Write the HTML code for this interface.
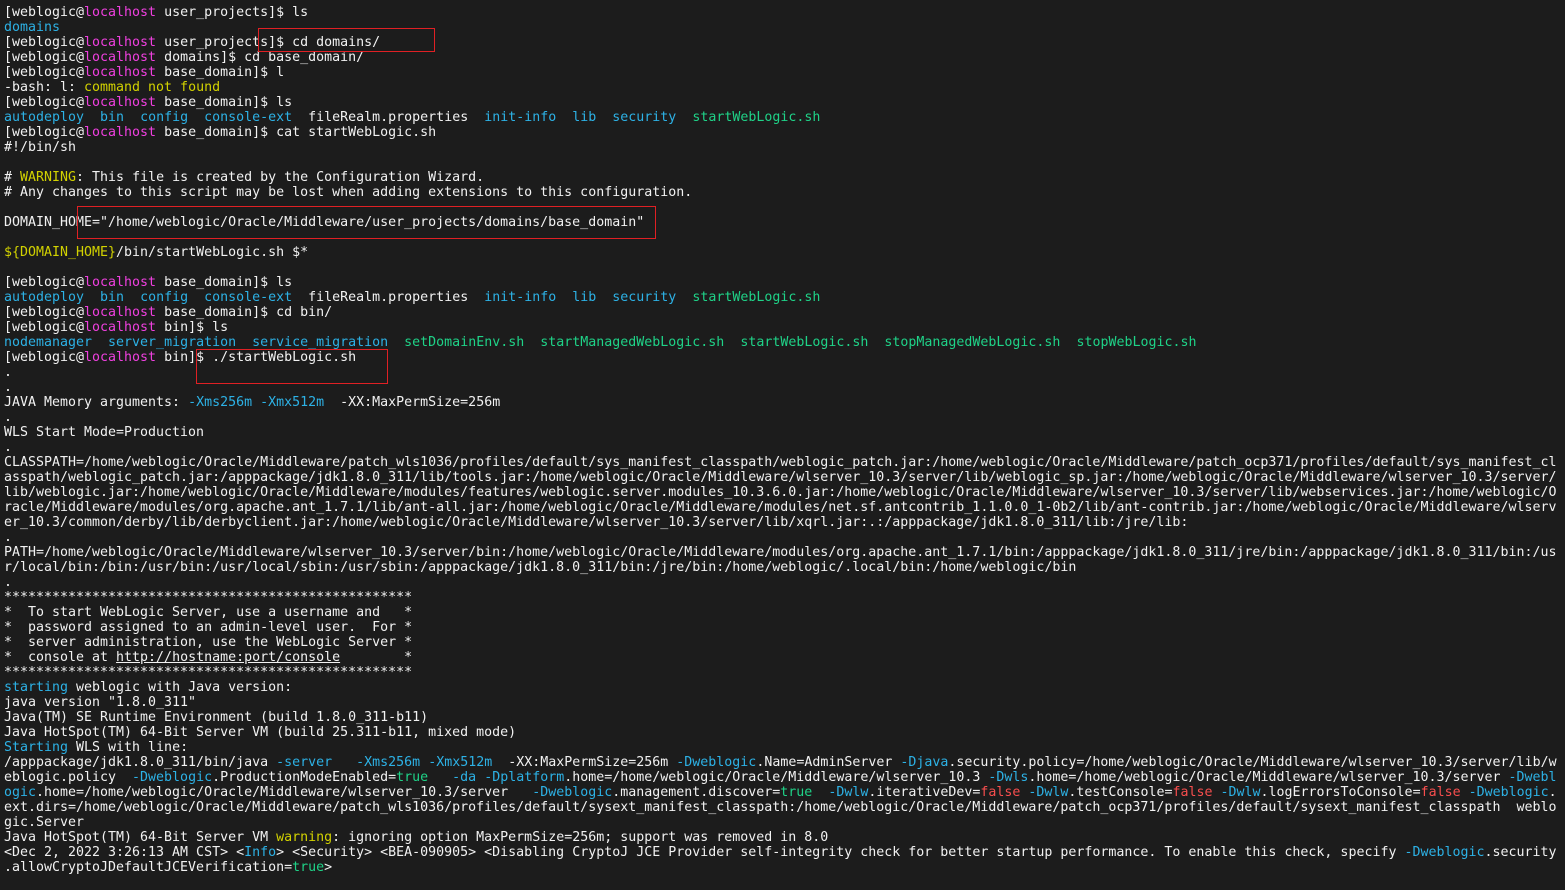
<!DOCTYPE html>
<html><head><meta charset="utf-8"><style>
html,body{margin:0;padding:0;background:#1c1c1c;width:1565px;height:890px;overflow:hidden}
pre{position:absolute;left:4px;top:5px;margin:0;font:13.28px/15px "DejaVu Sans Mono","Liberation Mono",monospace;letter-spacing:.016px;color:#f2f2f2;white-space:pre}
.c{color:#2db2e6}.g{color:#1fd388}.y{color:#d2d200}.r{color:#f84e4e}.m{color:#f040e0}
.b{position:absolute;border:1px solid #e02024;box-sizing:border-box}
u{text-decoration:underline}
</style></head><body>
<pre>[weblogic@<span class="m">localhost</span> user_projects]$ ls
<span class="c">domains</span>
[weblogic@<span class="m">localhost</span> user_projects]$ cd domains/
[weblogic@<span class="m">localhost</span> domains]$ cd base_domain/
[weblogic@<span class="m">localhost</span> base_domain]$ l
-bash: l: <span class="y">command not found</span>
[weblogic@<span class="m">localhost</span> base_domain]$ ls
<span class="c">autodeploy</span>  <span class="c">bin</span>  <span class="c">config</span>  <span class="c">console-ext</span>  fileRealm.properties  <span class="c">init-info</span>  <span class="c">lib</span>  <span class="c">security</span>  <span class="g">startWebLogic.sh</span>
[weblogic@<span class="m">localhost</span> base_domain]$ cat startWebLogic.sh
#!/bin/sh

# <span class="y">WARNING</span>: This file is created by the Configuration Wizard.
# Any changes to this script may be lost when adding extensions to this configuration.

DOMAIN_HOME="/home/weblogic/Oracle/Middleware/user_projects/domains/base_domain"

<span class="y">${DOMAIN_HOME}</span>/bin/startWebLogic.sh $*

[weblogic@<span class="m">localhost</span> base_domain]$ ls
<span class="c">autodeploy</span>  <span class="c">bin</span>  <span class="c">config</span>  <span class="c">console-ext</span>  fileRealm.properties  <span class="c">init-info</span>  <span class="c">lib</span>  <span class="c">security</span>  <span class="g">startWebLogic.sh</span>
[weblogic@<span class="m">localhost</span> base_domain]$ cd bin/
[weblogic@<span class="m">localhost</span> bin]$ ls
<span class="c">nodemanager</span>  <span class="c">server_migration</span>  <span class="c">service_migration</span>  <span class="g">setDomainEnv.sh</span>  <span class="g">startManagedWebLogic.sh</span>  <span class="g">startWebLogic.sh</span>  <span class="g">stopManagedWebLogic.sh</span>  <span class="g">stopWebLogic.sh</span>
[weblogic@<span class="m">localhost</span> bin]$ ./startWebLogic.sh
.
.
JAVA Memory arguments: <span class="c">-Xms256m</span> <span class="c">-Xmx512m</span>  -XX:MaxPermSize=256m
.
WLS Start Mode=Production
.
CLASSPATH=/home/weblogic/Oracle/Middleware/patch_wls1036/profiles/default/sys_manifest_classpath/weblogic_patch.jar:/home/weblogic/Oracle/Middleware/patch_ocp371/profiles/default/sys_manifest_cl
asspath/weblogic_patch.jar:/apppackage/jdk1.8.0_311/lib/tools.jar:/home/weblogic/Oracle/Middleware/wlserver_10.3/server/lib/weblogic_sp.jar:/home/weblogic/Oracle/Middleware/wlserver_10.3/server/
lib/weblogic.jar:/home/weblogic/Oracle/Middleware/modules/features/weblogic.server.modules_10.3.6.0.jar:/home/weblogic/Oracle/Middleware/wlserver_10.3/server/lib/webservices.jar:/home/weblogic/O
racle/Middleware/modules/org.apache.ant_1.7.1/lib/ant-all.jar:/home/weblogic/Oracle/Middleware/modules/net.sf.antcontrib_1.1.0.0_1-0b2/lib/ant-contrib.jar:/home/weblogic/Oracle/Middleware/wlserv
er_10.3/common/derby/lib/derbyclient.jar:/home/weblogic/Oracle/Middleware/wlserver_10.3/server/lib/xqrl.jar:.:/apppackage/jdk1.8.0_311/lib:/jre/lib:
.
PATH=/home/weblogic/Oracle/Middleware/wlserver_10.3/server/bin:/home/weblogic/Oracle/Middleware/modules/org.apache.ant_1.7.1/bin:/apppackage/jdk1.8.0_311/jre/bin:/apppackage/jdk1.8.0_311/bin:/us
r/local/bin:/bin:/usr/bin:/usr/local/sbin:/usr/sbin:/apppackage/jdk1.8.0_311/bin:/jre/bin:/home/weblogic/.local/bin:/home/weblogic/bin
.
***************************************************
*  To start WebLogic Server, use a username and   *
*  password assigned to an admin-level user.  For *
*  server administration, use the WebLogic Server *
*  console at <u>http://hostname:port/console</u>        *
***************************************************
<span class="c">starting</span> weblogic with Java version:
java version "1.8.0_311"
Java(TM) SE Runtime Environment (build 1.8.0_311-b11)
Java HotSpot(TM) 64-Bit Server VM (build 25.311-b11, mixed mode)
<span class="c">Starting</span> WLS with line:
/apppackage/jdk1.8.0_311/bin/java <span class="c">-server</span>   <span class="c">-Xms256m</span> <span class="c">-Xmx512m</span>  -XX:MaxPermSize=256m <span class="c">-Dweblogic</span>.Name=AdminServer <span class="c">-Djava</span>.security.policy=/home/weblogic/Oracle/Middleware/wlserver_10.3/server/lib/w
eblogic.policy  <span class="c">-Dweblogic</span>.ProductionModeEnabled=<span class="g">true</span>   <span class="c">-da</span> <span class="c">-Dplatform</span>.home=/home/weblogic/Oracle/Middleware/wlserver_10.3 <span class="c">-Dwls</span>.home=/home/weblogic/Oracle/Middleware/wlserver_10.3/server <span class="c">-Dwebl</span>
<span class="c">ogic</span>.home=/home/weblogic/Oracle/Middleware/wlserver_10.3/server   <span class="c">-Dweblogic</span>.management.discover=<span class="g">true</span>  <span class="c">-Dwlw</span>.iterativeDev=<span class="r">false</span> <span class="c">-Dwlw</span>.testConsole=<span class="r">false</span> <span class="c">-Dwlw</span>.logErrorsToConsole=<span class="r">false</span> <span class="c">-Dweblogic</span>.
ext.dirs=/home/weblogic/Oracle/Middleware/patch_wls1036/profiles/default/sysext_manifest_classpath:/home/weblogic/Oracle/Middleware/patch_ocp371/profiles/default/sysext_manifest_classpath  weblo
gic.Server
Java HotSpot(TM) 64-Bit Server VM <span class="y">warning</span>: ignoring option MaxPermSize=256m; support was removed in 8.0
&lt;Dec 2, 2022 3:26:13 AM CST&gt; &lt;<span class="c">Info</span>&gt; &lt;Security&gt; &lt;BEA-090905&gt; &lt;Disabling CryptoJ JCE Provider self-integrity check for better startup performance. To enable this check, specify <span class="c">-Dweblogic</span>.security
.allowCryptoJDefaultJCEVerification=<span class="g">true</span>&gt;</pre>
<div class="b" style="left:258px;top:28px;width:177px;height:24px"></div>
<div class="b" style="left:77px;top:206px;width:579px;height:33px"></div>
<div class="b" style="left:196px;top:349px;width:192px;height:35px"></div>
</body></html>
